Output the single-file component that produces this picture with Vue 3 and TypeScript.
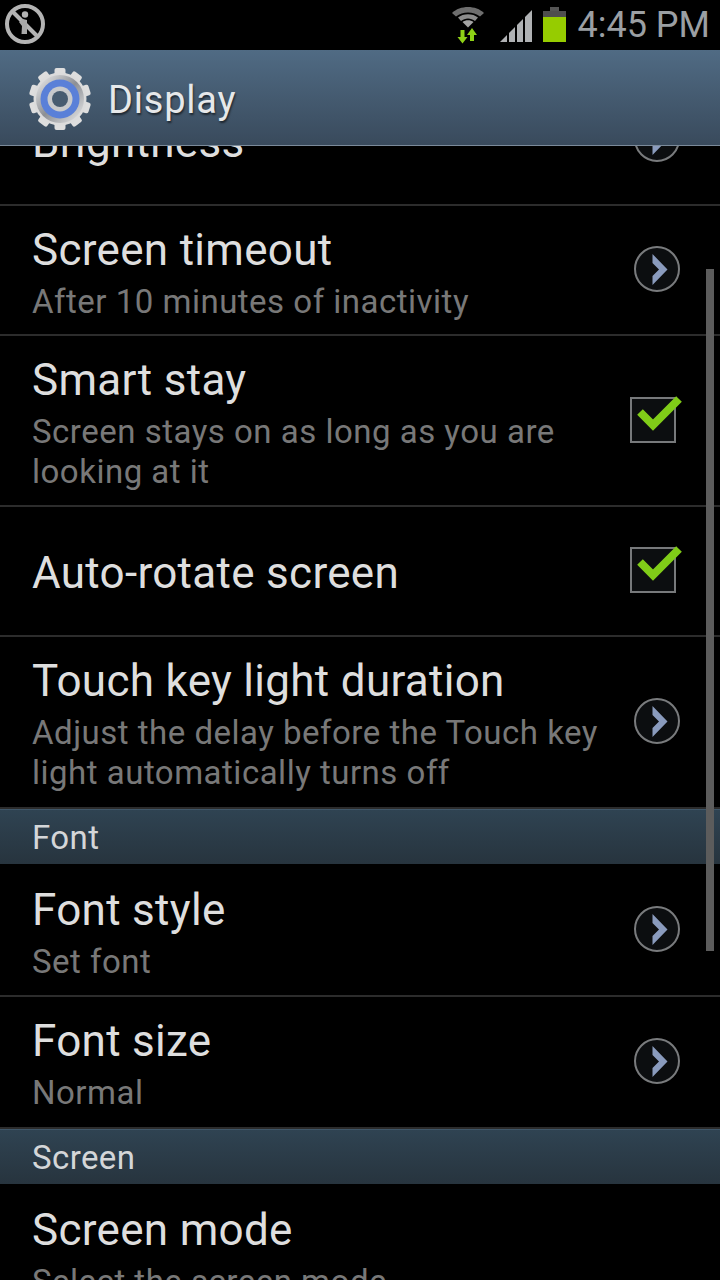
<script setup lang="ts">
type Item =
  | { kind: 'section'; title: string }
  | { kind: 'row'; title: string; lines: string[]; control: 'arrow' | 'check' | 'none'; height: number };

const items: Item[] = [
  { kind: 'row', title: 'Brightness', lines: [], control: 'arrow', height: 130 },
  { kind: 'row', title: 'Screen timeout', lines: ['After 10 minutes of inactivity'], control: 'arrow', height: 130 },
  { kind: 'row', title: 'Smart stay', lines: ['Screen stays on as long as you are', 'looking at it'], control: 'check', height: 171 },
  { kind: 'row', title: 'Auto-rotate screen', lines: [], control: 'check', height: 130 },
  { kind: 'row', title: 'Touch key light duration', lines: ['Adjust the delay before the Touch key', 'light automatically turns off'], control: 'arrow', height: 172 },
  { kind: 'section', title: 'Font' },
  { kind: 'row', title: 'Font style', lines: ['Set font'], control: 'arrow', height: 133 },
  { kind: 'row', title: 'Font size', lines: ['Normal'], control: 'arrow', height: 132 },
  { kind: 'section', title: 'Screen' },
  { kind: 'row', title: 'Screen mode', lines: ['Select the screen mode'], control: 'none', height: 130 },
];

const teeth: number[] = Array.from({ length: 10 }, (_, i) => i * 36);
</script>

<template>
  <div class="phone">
    <header class="status">
      <svg class="ico-access" width="50" height="50" viewBox="0 0 50 50">
        <circle cx="25" cy="24" r="18" fill="none" stroke="#b4b4b4" stroke-width="4" />
        <line x1="12" y1="11" x2="38" y2="37" stroke="#b4b4b4" stroke-width="4" />
        <circle cx="25" cy="14.500" r="3.200" fill="#b4b4b4" />
        <path d="M23 19l4 1v14h-5.500l.5-8-3-4z" fill="#a8a8a8" />
      </svg>
      <div class="status-right">
        <svg class="ico-wifi" width="36" height="46" viewBox="0 0 36 46">
          <path d="M2 10C10 2 26 2 34 10L30 13.500C23 8 13 8 6 13.500Z" fill="#6e6e6e" />
          <path d="M8 14.500C13 10 23 10 28 14.500L25 18C21 14.500 15 14.500 11 18Z" fill="#8c8c8c" />
          <path d="M12.500 19C15.500 16.500 20.500 16.500 23.500 19L18 24.500Z" fill="#a4a4a4" />
          <path d="M10.500 27h4v7h3l-5 6.500-5-6.500h3z" fill="#8ed116" />
          <path d="M22 25l5 7h-3v6h-4v-6h-3z" fill="#8ed116" />
        </svg>
        <svg class="ico-signal" width="34" height="34" viewBox="0 0 34 34">
          <path d="M1 33L8 26V33Z" fill="#b0b2b4" />
          <path d="M10 33V24L16 18V33Z" fill="#b0b2b4" />
          <path d="M18 33V16L24 10V33Z" fill="#b0b2b4" />
          <path d="M26 33V8L33 1V33Z" fill="#b0b2b4" />
        </svg>
        <div class="battery">
          <span class="battery-nub"></span>
          <span class="battery-empty"></span>
          <span class="battery-fill"></span>
        </div>
        <span class="clock">4:45 PM</span>
      </div>
    </header>

    <div class="action">
      <svg class="gear" width="64" height="64" viewBox="0 0 64 64">
        <defs>
          <linearGradient id="silver" x1="0" y1="0" x2="1" y2="1">
            <stop offset="0" stop-color="#f2f2f2" />
            <stop offset="0.5" stop-color="#8c8f94" />
            <stop offset="1" stop-color="#eeeeee" />
          </linearGradient>
        </defs>
        <rect
          v-for="angle in teeth"
          :key="angle"
          x="26.500"
          y="1"
          width="11"
          height="12"
          rx="2"
          fill="#dedede"
          :transform="`rotate(${angle} 32 32)`"
        />
        <circle cx="32" cy="32" r="26.500" fill="#dcdcdc" />
        <circle cx="32" cy="32" r="24" fill="url(#silver)" />
        <circle cx="32" cy="32" r="19.500" fill="#5a80d8" />
        <circle cx="32" cy="32" r="12.500" fill="#c8cacc" />
        <circle cx="32" cy="32" r="8" fill="#475c70" />
      </svg>
      <span class="action-title">Display</span>
    </div>

    <main class="content">
      <div class="list">
        <template v-for="item in items" :key="item.title">
          <div v-if="item.kind === 'section'" class="section">{{ item.title }}</div>
          <div v-else class="row" :class="{ single: !item.lines.length }" :style="{ height: item.height + 'px' }">
            <div class="texts">
              <div class="title">{{ item.title }}</div>
              <div class="sub">
                <div v-for="line in item.lines" :key="line">{{ line }}</div>
              </div>
            </div>
            <svg v-if="item.control === 'arrow'" class="control-arrow" width="48" height="48" viewBox="0 0 48 48">
              <circle cx="24" cy="24" r="22" fill="#0c0e10" stroke="#797b7d" stroke-width="2" />
              <path d="M19.500 9L34.500 24.500L19.500 40V31L26 24.500L19.500 18Z" fill="#8a9bbd" />
            </svg>
            <div v-else-if="item.control === 'check'" class="control-check">
              <svg class="tick" width="52" height="40" viewBox="0 0 52 40">
                <path d="M4 17L17 30L43 4" fill="none" stroke="#80cc18" stroke-width="8" />
              </svg>
            </div>
          </div>
        </template>
      </div>
      <div class="scrollbar"></div>
    </main>
  </div>
</template>

<style scoped>
.phone {
  width: 720px;
  height: 1280px;
  background: #000;
  overflow: hidden;
  display: flex;
  flex-direction: column;
  font-family: Roboto, "Liberation Sans", sans-serif;
}
.status {
  height: 50px;
  flex: none;
  display: flex;
  justify-content: space-between;
  align-items: flex-start;
}
.status-right {
  display: flex;
  align-items: flex-start;
  padding-right: 10px;
}
.ico-wifi {
  margin-top: 3px;
  margin-right: 13px;
}
.ico-signal {
  margin-top: 9px;
  margin-right: 10px;
}
.battery {
  width: 23px;
  margin-top: 7px;
  margin-right: 12px;
  display: flex;
  flex-direction: column;
  align-items: center;
}
.battery-nub {
  width: 9px;
  height: 4px;
  background: #555;
}
.battery-empty {
  width: 23px;
  height: 6px;
  background: #4e4e4e;
}
.battery-fill {
  width: 23px;
  height: 25px;
  background: #96cc00;
}
.clock {
  font-size: 36px;
  line-height: 50px;
  color: #9b9fa3;
}
.action {
  height: 96px;
  flex: none;
  box-sizing: border-box;
  border-bottom: 1px solid #7b8a9a;
  background: linear-gradient(#506b84, #394a5c);
  display: flex;
  align-items: center;
  padding-left: 28px;
  gap: 16px;
}
.gear {
  margin-top: 2px;
}
.action-title {
  margin-top: 4px;
  font-size: 38px;
  letter-spacing: 0.8px;
  color: #e6e8ea;
  text-shadow: 1px 2px 2px rgba(0, 0, 0, 0.55);
}
.content {
  flex: 1;
  min-height: 0;
  position: relative;
  overflow: hidden;
}
.list {
  margin-top: -70px;
}
.row {
  box-sizing: border-box;
  border-bottom: 2px solid #2c2c2c;
  display: flex;
  justify-content: space-between;
  align-items: center;
  padding: 0 39px 0 32px;
}
.texts {
  align-self: flex-start;
  padding-top: 16px;
}
.section + .row .texts {
  padding-top: 18px;
}
.row.single .texts {
  align-self: center;
  padding-top: 8px;
}
.title {
  font-size: 44px;
  letter-spacing: 0.3px;
  line-height: 56px;
  color: #dedede;
}
.sub {
  margin-top: 4px;
  font-size: 33px;
  letter-spacing: 0.5px;
  line-height: 40px;
  color: #787878;
}
.control-arrow,
.control-check {
  margin-bottom: 2px;
}
.control-check {
  position: relative;
  width: 46px;
  height: 46px;
  margin-right: 5px;
  box-sizing: border-box;
  border: 2px solid #77797b;
  background: #0c0e10;
}
.tick {
  position: absolute;
  left: 4px;
  top: -4px;
}
.section {
  height: 55px;
  box-sizing: border-box;
  border-top: 1px solid #3f5668;
  background: linear-gradient(#2f4352, #27343e);
  padding-left: 32px;
  font-size: 33px;
  letter-spacing: 0.4px;
  line-height: 56px;
  color: #d4d6d8;
}
.scrollbar {
  position: absolute;
  left: 706px;
  top: 123px;
  width: 8px;
  height: 682px;
  background: #5c5c5c;
}
</style>
